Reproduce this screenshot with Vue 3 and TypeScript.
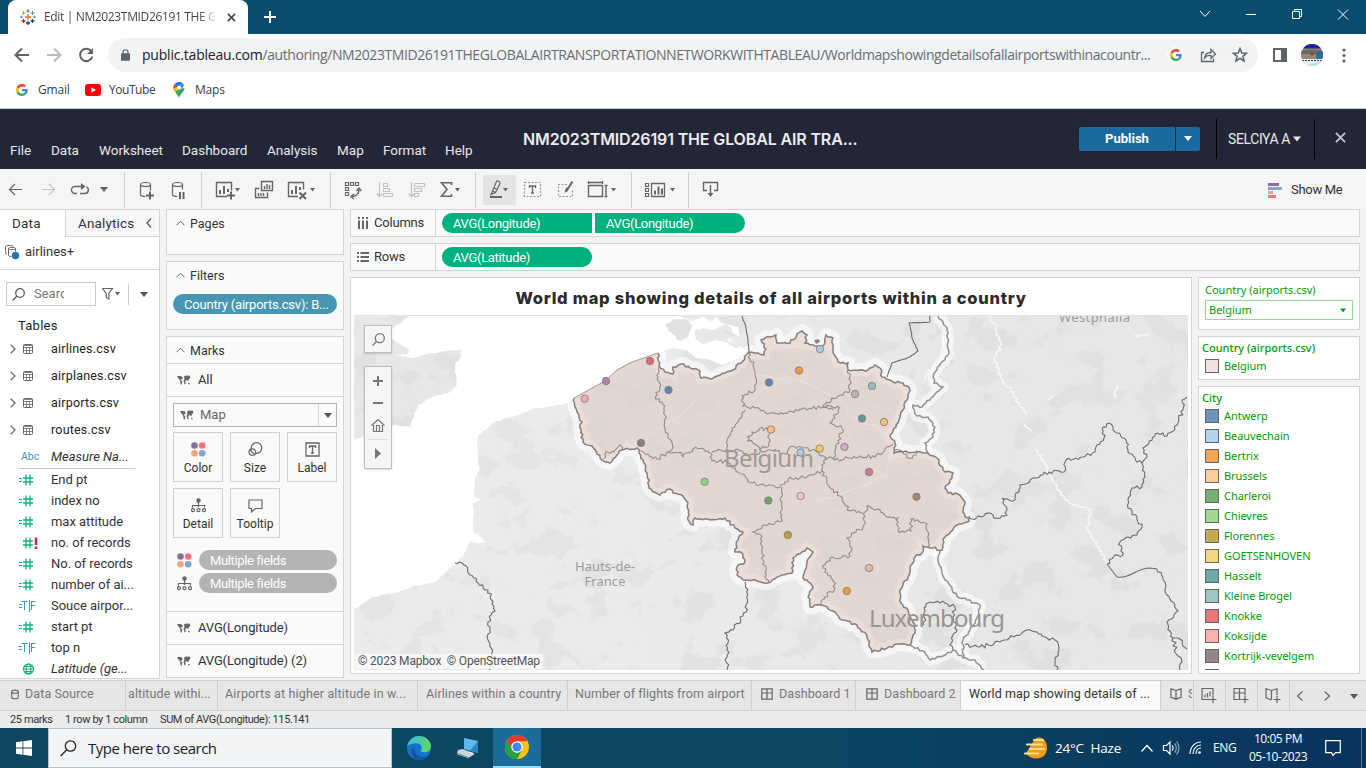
<script setup lang="ts">
type Pt = [number, number]

interface Tool { x: number; w: number; body: string; sep?: boolean; hot?: boolean; dim?: boolean }

const caret = (x: number) => `<path fill="#666" stroke="none" d="M${x - 2.5} 188h5l-2.5 3.5z"/>`

const tools: Tool[] = [
  { x: 8, w: 16, body: '<path d="M22 189.500H9.500M15 184l-5.500 5.500 5.500 5.500"/>' },
  { x: 41, w: 16, dim: true, body: '<path d="M42 189.500H54.500M49 184l5.500 5.500-5.500 5.500"/>' },
  { x: 70, w: 20, body: '<path stroke-width="1.400" d="M77 193.500H75a3.500 3.500 0 0 1 0-7H82M80 193.500H85a3.500 3.500 0 0 0 1.500-6.600"/><path fill="#666" stroke="none" d="M81 183l4.500 3.500-4.500 3.500z"/>' },
  { x: 99, w: 10, body: '<path fill="#666" stroke="none" d="M100 187h8l-4 5z"/>' },
  { x: 124, w: 1, sep: true, body: '' },
  { x: 139, w: 16, body: '<ellipse cx="145.500" cy="184.500" rx="5" ry="2"/><path d="M140.500 184.500v10c0 1.200 2 2 5 2M150.500 184.500v6"/><path stroke-width="2" d="M146 195.500h8M150 191.500v8"/>' },
  { x: 171, w: 15, body: '<ellipse cx="177.500" cy="184.500" rx="5" ry="2"/><path d="M172.500 184.500v10c0 1.200 2 2 5 2M182.500 184.500v5"/><path stroke-width="2" d="M180 192v7M183.500 192v7"/>' },
  { x: 201, w: 1, sep: true, body: '' },
  { x: 215, w: 26, body: '<path stroke-width="1.400" d="M227 196.500h-10.500v-14h15v8"/><path stroke-width="2" d="M220 194v-4M224 194v-8M228 192v-3M227 195.500h8M231 191.500v8"/>' + caret(237.5) },
  { x: 254, w: 20, body: '<path stroke-width="1.400" d="M261.500 190.500v-9h11v9zM259.500 188.500h-4v9h12v-5"/><path stroke-width="1.400" d="M264.500 189v-3M267 189v-5M269.500 189v-4M258.500 196v-3M261 196v-3M263.500 196v-3"/>' },
  { x: 287, w: 30, body: '<path stroke-width="1.400" d="M298 196.500h-9.500v-14h15v7"/><path stroke-width="2" d="M292 194v-4M296 194v-8M300 190v-3M299.500 192.500l6.500 6.500M306 192.500l-6.500 6.500"/>' + caret(312.5) },
  { x: 330, w: 1, sep: true, body: '' },
  { x: 344, w: 18, body: '<path d="M345.500 182.500h3v3h-3zM350.500 182.500h3v3h-3zM355.500 182.500h3v3h-3zM345.500 187.500h3v3h-3zM345.500 192.500h3v3h-3z"/><path stroke-width="1.400" d="M351 196.500c5 0 8-2 8-7M356.500 191l2.500-3 2.500 3M354 194l-3 2.500 3 2.500"/>' },
  { x: 376, w: 18, dim: true, body: '<path d="M379.500 182v14M376.800 193.500l2.700 3 2.700-3M383.500 183.500h4v3h-4zM383.500 188.500h6v3h-6zM383.500 193.500h9v3h-9z"/>' },
  { x: 408, w: 18, dim: true, body: '<path d="M411.500 182v14M408.800 193.500l2.700 3 2.700-3M414.500 183.500h10v3h-10zM414.500 188.500h7v3h-7zM414.500 193.500h4v3h-4z"/>' },
  { x: 440, w: 22, body: '<path stroke-width="1.600" d="M451.500 185v-2.200h-10l5.500 6.700-5.500 6.700h10v-2.200"/>' + caret(457.5) },
  { x: 475, w: 1, sep: true, body: '' },
  { x: 483, w: 33, hot: true, body: '<path d="M492.500 191l4-9.500c1-1.200 3.800 0 3.500 2l-4.500 9zM494 188l3.500 1.700M492.500 191l-1.500 3.500 4.500-2"/><path stroke-width="2" d="M490 197h12"/>' + caret(505.5) },
  { x: 523, w: 19, body: '<rect x="524.500" y="182.500" width="16" height="14" stroke-dasharray="2 1.500" stroke="#999"/><path stroke-width="1.300" d="M529.500 188v-2h6v2M532.500 186v7M531 193h3"/>' },
  { x: 557, w: 18, body: '<path stroke="#999" stroke-dasharray="2 1.500" d="M567 184.500h-8.500v12h14v-7"/><path stroke-width="2" d="M572.500 181.500l-4.500 7"/><path fill="#666" stroke="none" d="M568.500 187.500c1 2-1 5-4.500 5 1.500-1 1-3.500 2.500-5z"/>' },
  { x: 587, w: 31, body: '<path stroke-width="1.400" d="M588.500 185.500h14v11h-14zM588.500 181v3M602.500 181v3M588.500 182.500h14M604.500 185.500h3M604.500 196.500h3M606 185.500v11"/>' + caret(613.5) },
  { x: 631, w: 1, sep: true, body: '' },
  { x: 644, w: 34, body: '<path d="M645.500 183.500h3v3h-3zM645.500 188.500h3v3h-3zM645.500 193.500h3v3h-3z"/><path stroke-width="1.300" d="M651.500 183.500h13v13h-13z"/><path stroke-width="2" d="M655 194.500v-4M658.500 194.500v-8M662 194.500v-6"/>' + caret(672.5) },
  { x: 688, w: 1, sep: true, body: '' },
  { x: 702, w: 18, body: '<path stroke-width="1.400" d="M707 190.500h-3.500v-8h14v8h-3.500M710.500 185v9"/><path fill="#666" stroke="none" d="M707.500 193h6l-3 4z"/>' },
]
const toolGap = (i: number) => tools[i].x - (i ? tools[i - 1].x + tools[i - 1].w : 0)

const menu = ['File', 'Data', 'Worksheet', 'Dashboard', 'Analysis', 'Map', 'Format', 'Help']
const tables = ['airlines.csv', 'airplanes.csv', 'airports.csv', 'routes.csv']
const fields = [
  { k: 'num', t: 'End pt' }, { k: 'num', t: 'index no' }, { k: 'num', t: 'max attitude' },
  { k: 'err', t: 'no. of records' }, { k: 'num', t: 'No. of records' }, { k: 'num', t: 'number of ai...' },
  { k: 'tf', t: 'Souce airpor...' }, { k: 'num', t: 'start pt' }, { k: 'tf', t: 'top n' }, { k: 'geo', t: 'Latitude (ge...' },
]
const cities = [
  ['Antwerp', '#6f94bb'], ['Beauvechain', '#b1d3ec'], ['Bertrix', '#f5a255'], ['Brussels', '#ffcb96'],
  ['Charleroi', '#76b172'], ['Chievres', '#a1d993'], ['Florennes', '#c2ab54'], ['GOETSENHOVEN', '#f3d67e'],
  ['Hasselt', '#6ba9a5'], ['Kleine Brogel', '#9dc8c2'], ['Knokke', '#e77779'], ['Koksijde', '#ffb0ac'],
  ['Kortrijk-vevelgem', '#928885'], ['', '#e1d8d5'],
]
const sheets = [
  { t: 'altitude withi...', c: 's1' }, { t: 'Airports at higher altitude in w...', c: 's2' },
  { t: 'Airlines within a country', c: 's3' }, { t: 'Number of flights from airport', c: 's4' },
  { t: 'Dashboard 1', c: 's5', dash: true }, { t: 'Dashboard 2', c: 's6', dash: true },
  { t: 'World map showing details of ...', c: 's7 on' },
]

/* Map geometry */
const parse = (s: string): Pt[] => s.trim().split(/\s+/).map(p => p.split(',').map(Number) as Pt)
const noise = (a: number, b: number) => {
  const v = Math.sin(a * 12.9898 + b * 78.233) * 43758.5453
  return v - Math.floor(v) - 0.5
}
function rough(s: string, amp = 1.6, step = 3.2): string {
  const pts = parse(s)
  let d = `M${pts[0][0]} ${pts[0][1]}`
  for (let i = 1; i < pts.length; i++) {
    const [x0, y0] = pts[i - 1], [x1, y1] = pts[i]
    const len = Math.hypot(x1 - x0, y1 - y0)
    const n = Math.max(1, Math.round(len / step))
    for (let k = 1; k < n; k++) {
      const t = k / n, o = noise(x0 + k * 1.7, y1 + k) * amp * 2
      d += `L${(x0 + (x1 - x0) * t - (y1 - y0) / len * o).toFixed(1)} ${(y0 + (y1 - y0) * t + (x1 - x0) / len * o).toFixed(1)}`
    }
    d += `L${x1} ${y1}`
  }
  return d
}

const belgium = rough('658,353 659,366 665,372 673,374 673,367 681,364 693,369 700,371 701,378 712,379 717,376 725,373 733,370 743,361 748,353 758,353 764,355 766,349 761,340 770,337 776,335 777,343 790,343 797,334 802,331 807,335 805,343 815,346 822,346 825,342 826,335 833,338 833,350 838,362 848,363 848,370 868,370 875,365 880,368 882,377 893,382 903,383 910,390 905,402 903,410 898,423 890,435 895,443 894,453 903,452 917,452 928,453 937,458 945,472 953,473 950,480 945,488 948,493 958,494 965,502 963,512 969,521 957,525 945,537 942,550 928,547 923,546 922,553 915,557 910,568 908,577 900,590 901,603 908,610 913,622 915,633 910,645 897,644 887,648 872,652 867,637 857,625 842,620 833,611 822,605 810,607 808,597 813,587 807,580 803,578 807,563 813,552 807,548 802,552 793,558 792,573 782,575 768,583 757,581 743,580 737,575 737,567 745,562 742,553 735,552 738,540 743,532 735,528 725,518 710,520 695,518 693,525 688,520 688,503 683,496 673,493 670,489 660,495 649,488 647,473 643,460 637,448 622,450 617,455 610,463 600,458 592,446 583,442 580,425 582,422 577,412 574,398', 1.3, 2.6)
const coast = 'L594 387L605 381L617 370L632 362Z'

const provinces = [
  '659,367 657,375 661,385 655,397 662,402 665,415 665,428 668,438 673,447 668,452 657,459 648,454 640,451',
  '668,452 682,453 683,457 693,449 708,451 712,455 712,461 727,462',
  '712,452 727,450 728,438 732,428 737,423 742,415 745,410',
  '748,353 753,365 755,372 755,390 742,396 743,406 755,408 770,413 785,413 800,409 823,407 833,410',
  '848,370 850,390 840,395 825,404 823,407 838,406 838,410 830,423 842,428 839,443 835,450 835,460',
  '825,457 835,460 850,458 860,456 875,457 893,444',
  '725,450 740,451 750,455 768,450 787,454 790,447 803,448 812,450 818,452 825,457 822,471',
  '727,462 733,468 743,474 752,483 767,486 780,487 790,477 800,478 822,471 828,485 840,496 850,511 863,513',
  '760,428 768,430 769,445 760,450 753,443 747,441 752,432 760,428',
  '782,487 780,500 782,515 782,521 765,525 752,532 762,537 761,545 763,560 768,583',
  '865,512 863,527 847,538 852,548 850,556 830,558 823,568 833,580 835,588 825,597 820,605',
  '865,512 867,506 880,510 890,517 898,518 898,531 911,531 911,519 927,524 928,547',
  '604,459 606,452 614,452 620,445 622,450',
  '894,450 903,452 909,458 916,455 917,450',
].map(s => rough(s, 1.9, 2.2))

const borders = [
  '938,316 947,328 949,353 935,372 934,383 943,387 935,394 922,407 913,405 917,416 928,417 935,427 933,437 925,443 928,453',
  '940,550 938,560 945,580 957,596 967,600 980,605 977,618 970,630 963,640 963,658',
  '910,645 925,652 930,660 943,656 953,650 963,658 975,660 984,670',
].map(s => rough(s, 1.2, 2.6))

const regions = [
  '742,316 746,328 748,340 749,352',
  '930,316 930,322 909,323 913,340 918,351 910,357 892,363 887,377',
  '969,516 972,519 988,513 997,518 1007,515 1002,498 1015,500 1020,485 1037,478 1049,472 1064,472 1066,460 1083,457 1095,452 1097,445 1104,438 1103,427 1109,423 1113,427 1117,433 1126,440 1128,452 1137,462 1142,463 1147,457 1143,448 1158,433 1167,436 1177,425 1183,410 1182,400 1187,397',
  '1142,463 1145,477 1142,487 1132,488 1128,500 1128,508 1137,517 1142,527 1137,535 1120,542 1123,555 1115,555 1107,564',
  '1157,569 1165,582 1167,595 1178,611 1167,622 1173,638 1177,655 1182,662 1180,670',
  '1173,638 1178,638 1187,649',
  '965,645 980,647 1000,642 1023,632 1032,631 1047,638 1055,640 1059,650 1055,660 1057,670',
  '924,625 924,608 930,602 945,603 955,607 953,617 957,630 950,645 953,650',
  '455,563 462,563 478,583 488,590 495,611 488,622 490,630 488,640 492,653 490,670',
  '745,582 747,597 746,612 733,630 725,633 728,643 727,657 727,670',
].map((s, i) => rough(s, i < 2 ? 0.4 : 1.9, 2.4))
const smoothRegion = 'M1107 564L1117 577C1130 579 1136 568 1150 568L1157 569'

const rivers = [
  '988,316 996,325 999,340 1001,350 994,358 1001,375 1003,383 1014,392 1016,402 1024,408 1026,415',
  '1024,424 1031,431', '1035,449 1043,460 1052,478 1065,500 1078,505 1091,512 1088,530 1107,562',
  '944,336 941,360 929,370 925,380', '1135,335 1149,334', '1048,400 1054,396', '1114,398 1118,385',
].map(s => rough(s, 1.8, 2.4))
const streams = [
  '780,374 795,380 810,384 830,395 845,405 850,415 862,424 875,425 887,437',
  '892,458 885,475 870,483 850,490 832,498 812,500', '645,441 655,430 667,424 680,415 695,402', '754,374 770,377 790,382',
].map(s => rough(s, 1))

const england = rough('354,316 409,316 393,328 386,332 396,342 409,350 406,355 385,353 410,358 440,352 461,350 460,358 455,365 457,385 450,392 432,397 418,405 412,420 411,427 380,423 362,437 354,440', 0.8) + 'Z'
const mainland = rough('354,609 373,597 395,593 412,587 435,582 455,564 462,557 470,542 485,543 482,538 473,532 473,503 481,500 474,496 475,477 480,470 478,460 477,440 478,435 488,428 492,423 518,415 535,408 545,407 565,404 574,398', 0.6) +
  'L605 381L632 362L658 353L672 348L687 350L696 358L708 359L722 365L738 359L747 351L740 346L736 348L727 343L733 340L722 334L726 329L740 337L738 327L722 323L715 316L1188 316V670H354Z'
const isle1 = rough('665,325 675,319 688,320 692,328 688,337 680,341 670,332 665,325', 0.9) + 'Z'
const isle2 = rough('694,331 703,328 715,330 727,324 733,331 727,343 715,340 703,344 696,340 694,331', 0.9) + 'Z'
const isle3 = rough('680,316 690,321 702,317 712,321 716,316', 0.6) + 'Z'

const marks: [number, number, string][] = [
  [584.7, 398.7, '#f5a9a5'], [606, 381, '#ae82a6'], [650, 361, '#e1696d'], [668.5, 390, '#5f86b2'],
  [641, 443, '#8a807e'], [769, 382.5, '#5f86b2'], [799, 370.5, '#f09a47'], [820, 349, '#a9cbe6'],
  [872, 386, '#93c0b9'], [855, 394, '#bdb3b0'], [862, 418.5, '#5a9e9a'], [884, 422, '#f9bd82'],
  [771, 429.5, '#f9bd82'], [844.5, 447, '#d5a8cc'], [819.7, 448.6, '#ecca69'], [800.5, 452.5, '#a9cbe6'],
  [869, 472, '#d47a9c'], [916.5, 496.7, '#a98672'], [704.6, 481.8, '#97d188'], [768.3, 500.5, '#67a864'],
  [800.5, 496, '#f5bfd0'], [787.8, 535, '#bb9f47'], [869, 568, '#ddb9a6'], [846.8, 591, '#f19942'],
]
const worldPath = 'M0 1.500l2-.8 3 .8.8 2-2 1.200 1.600 2-.8 3-1-.500L3.200 5.500 1.500 3.500zM7 1.500l2-1 4 .3.300 2-1.300 1.500-.800 2-1.500-1.300-1.500 1 .5 2.500-1.200 1-1-4 1-1.500zM11 8l1.800.3-.400 1.200-1.400-.5z'
</script>

<template>
  <div class="screen">
    <header class="strip">
      <div class="tab">
        <svg class="fav" viewBox="0 0 16 16" width="16" height="16" fill="none">
          <path stroke="#e8762d" stroke-width="1.400" d="M8 5v6M5 8h6" />
          <path stroke="#5b879b" d="M8 0v4M6 2h4M12.500 2v4M10.500 4h4" />
          <path stroke="#eb912c" d="M3.500 2v4M1.500 4h4" /><path stroke="#7099a6" d="M0 8h3M1.500 6.500v3" />
          <path stroke="#c72035" stroke-width="1.300" d="M3.500 10v4M1.500 12h4" />
          <path stroke="#1f457e" stroke-width="1.300" d="M12.500 10v4M10.500 12h4M8 12v4M6 14h4" /><path stroke="#7199a6" d="M13 8h3M14.500 6.500v3" />
        </svg>
        <span class="tab-title">Edit | NM2023TMID26191 THE G</span>
        <svg viewBox="0 0 10 10" width="9" height="9" stroke="#45494d" stroke-width="1.800"><path d="M1 1l8 8M9 1l-8 8" /></svg>
      </div>
      <svg class="plus" viewBox="0 0 12 12" width="12" height="12" stroke="#fff" stroke-width="2"><path d="M6 0v12M0 6h12" /></svg>
      <svg class="wins" viewBox="1198 6 152 18" width="152" height="18" fill="none" stroke="#fff" stroke-width="1">
        <path d="M1200 11l5 5.500 5-5.500M1246 14.500h10M1292.500 11.500h7v7h-7zM1294.500 11.500v-2h7v7h-2M1338 9.500l10 10M1348 9.500l-10 10" />
      </svg>
    </header>

    <div class="nav">
      <svg viewBox="12 44 84 22" width="84" height="22" fill="none" stroke="#5f6368" stroke-width="2">
        <path d="M29 55H16M22 48.500L15.500 55l6.500 6.500" /><path stroke="#b8babd" d="M47 55h13M54 48.500l6.500 6.500-6.500 6.500" />
        <path d="M91.500 51.500a6.200 6.200 0 1 0 .8 5" /><path fill="#5f6368" stroke="none" d="M93 48v6h-6z" />
      </svg>
      <div class="url">
        <svg viewBox="0 0 10 13" width="9" height="12"><path fill="#5f6368" d="M1 4.500h8q1 0 1 1V12q0 1-1 1H1q-1 0-1-1V5.500q0-1 1-1z" /><path d="M2.300 5V3.300a2.700 2.600 0 0 1 5.400 0V5" fill="none" stroke="#5f6368" stroke-width="1.300" /></svg>
        <span class="addr"><b>public.tableau.com</b>/authoring/NM2023TMID26191THEGLOBALAIRTRANSPORTATIONNETWORKWITHTABLEAU/Worldmapshowingdetailsofallairportswithinacountr...</span>
        <span class="gbox"><svg viewBox="0 0 48 48" width="12" height="12"><path fill="#ea4335" d="M24 9.500c3.500 0 6.700 1.200 9.200 3.600l6.900-6.900C35.900 2.400 30.500 0 24 0 14.600 0 6.500 5.400 2.600 13.200l8 6.200C12.400 13.700 17.700 9.500 24 9.500z" /><path fill="#4285f4" d="M47 24.600c0-1.600-.2-3.100-.4-4.600H24v9h12.900c-.6 3-2.200 5.500-4.800 7.200l7.700 6C44.400 38 47 31.800 47 24.600z" /><path fill="#fbbc05" d="M10.500 28.600a14.500 14.500 0 0 1 0-9.200l-8-6.200a24 24 0 0 0 0 21.600z" /><path fill="#34a853" d="M24 48c6.500 0 11.900-2.100 15.900-5.800l-7.700-6c-2.200 1.500-5 2.300-8.200 2.300-6.300 0-11.600-4.200-13.500-9.900l-8 6.200C6.500 42.600 14.600 48 24 48z" /></svg></span>
        <svg class="share" viewBox="1200 47 48 17" width="48" height="17" fill="none" stroke="#5f6368" stroke-width="1.300">
          <path d="M1204 52.500h-2.500v9h12v-3M1204.500 58c.5-4 3.500-5.500 6.500-5.500v-3.200l4.500 4.700-4.500 4.500v-3c-3-.2-5 .5-6.500 2.500z" />
          <path stroke-width="1.500" d="M1240 48.500l1.800 4.500 4.700.3-3.600 3 1.200 4.700-4.100-2.600-4.100 2.600 1.200-4.700-3.600-3 4.700-.3z" />
        </svg>
      </div>
      <svg class="navr" viewBox="1270 42 86 26" width="86" height="26">
        <path d="M1274 49h12v12h-12z" fill="none" stroke="#5f6368" stroke-width="2" /><path fill="#5f6368" d="M1281 48h6v14h-6z" />
        <defs><clipPath id="ava"><circle cx="1312" cy="55" r="11" /></clipPath></defs>
        <g clip-path="url(#ava)"><path fill="#8d8a7d" d="M1301 44h22v22h-22z" /><path fill="#2222a4" d="M1301 44h22v4.500h-22z" /><path fill="#6e6b5e" d="M1301 50h22v4h-22z" /><path fill="#2c6aa0" d="M1316 52h7v7h-7z" /><path fill="#e9eef0" d="M1301 59h22v7h-22z" /><path stroke="#333" stroke-dasharray="2 1" d="M1302 60.500h20" /><path fill="#bde0f3" d="M1310 64l13-3v5h-13z" /><circle cx="1312" cy="54" r="1.500" fill="#b02a2a" /></g>
        <g fill="#5f6368"><circle cx="1344" cy="50" r="1.600" /><circle cx="1344" cy="55.500" r="1.600" /><circle cx="1344" cy="61" r="1.600" /></g>
      </svg>
    </div>

    <div class="marks-bar">
      <svg viewBox="0 0 48 48" width="12" height="12"><path fill="#ea4335" d="M24 9.500c3.500 0 6.700 1.200 9.200 3.600l6.900-6.900C35.900 2.400 30.500 0 24 0 14.600 0 6.500 5.400 2.600 13.200l8 6.200C12.400 13.700 17.700 9.500 24 9.500z" /><path fill="#4285f4" d="M47 24.600c0-1.600-.2-3.100-.4-4.600H24v9h12.900c-.6 3-2.200 5.500-4.800 7.200l7.700 6C44.400 38 47 31.800 47 24.600z" /><path fill="#fbbc05" d="M10.500 28.600a14.500 14.500 0 0 1 0-9.200l-8-6.200a24 24 0 0 0 0 21.600z" /><path fill="#34a853" d="M24 48c6.500 0 11.900-2.100 15.900-5.800l-7.700-6c-2.200 1.500-5 2.300-8.200 2.300-6.300 0-11.600-4.200-13.500-9.900l-8 6.200C6.500 42.600 14.600 48 24 48z" /></svg>
      <span class="bm1">Gmail</span>
      <svg viewBox="0 0 16 12" width="16" height="12"><rect width="16" height="12" rx="3" fill="#f00" /><path fill="#fff" d="M6.300 3.300v5.400L11 6z" /></svg>
      <span class="bm2">YouTube</span>
      <svg viewBox="0 0 12 16" width="12" height="16"><path fill="#34a853" d="M.8 8C2 10.500 5 12.500 6 16c.8-4 5.500-6 5.500-10z" /><path fill="#4285f4" d="M6 0a5.700 5.700 0 0 1 5.200 3.500L6.500 9 3 4z" /><path fill="#1a73e8" d="M6 0a6 6 0 0 0-4.500 2L5 5l4-4.300z" /><path fill="#ea4335" d="M1.500 2A6 6 0 0 0 .2 6l2 2L5 5z" /><path fill="#fbbc04" d="M.2 6c0 2 .8 3 2 4.800L7.500 5z" /><circle cx="6" cy="5.700" r="2.100" fill="#fff" /></svg>
      <span class="bm3">Maps</span>
    </div>

    <div class="apphead">
      <nav class="menu"><span v-for="m in menu" :key="m">{{ m }}</span></nav>
      <div class="wb">NM2023TMID26191 THE GLOBAL AIR TRA...</div>
      <div class="publish"><span>Publish</span><i><svg viewBox="0 0 8 5" width="8" height="5"><path fill="#fff" d="M0 0h8L4 5z" /></svg></i></div>
      <div class="user">SELCIYA A<svg viewBox="0 0 8 5" width="8" height="6"><path fill="#e8e8ea" d="M0 0h8L4 5z" /></svg></div>
      <svg class="close" viewBox="0 0 12 12" width="11" height="11" stroke="#c3c4c9" stroke-width="2"><path d="M1 1l10 10M11 1L1 11" /></svg>
    </div>

    <div class="toolbar">
      <template v-for="(t, i) in tools" :key="t.x">
        <svg class="tool" :class="{ sep: t.sep, hot: t.hot }" :style="{ marginLeft: toolGap(i) + 'px' }" :width="t.w" :height="t.hot ? 30 : 36"
          :viewBox="`${t.x} ${t.hot ? 175 : 172} ${t.w} ${t.hot ? 30 : 36}`" fill="none" :stroke="t.dim ? '#c3c3c3' : '#666'" stroke-width="1.200" v-html="t.body" />
      </template>
      <div class="showme"><svg viewBox="0 0 14 15" width="14" height="15"><path fill="#896e99" d="M0 0h11v3H0z" /><path fill="#82a6cc" d="M0 4h14v3H0z" /><path fill="#f2a47e" d="M0 8h5v3H0z" /><path fill="#fc7181" d="M0 12h8v3H0z" /></svg><span>Show Me</span></div>
    </div>

    <main class="work">
      <aside class="data">
        <div class="dtabs"><span class="on">Data</span><span class="an">Analytics<svg viewBox="0 0 6 10" width="6" height="10" fill="none" stroke="#555" stroke-width="1.200"><path d="M5 .5L1 5l4 4.500" /></svg></span></div>
        <div class="ds">
          <svg viewBox="0 0 15 15" width="15" height="15" fill="none" stroke="#666"><path d="M2 9.500C.5 9 .5 8 .5 2c0-2 7-2 8-.5M3.500 3.500c0-1.500 7-1.500 7 0s-7 1.500-7 0zM3.500 3.500v6.500c0 1 1 1.500 3 1.500M10.500 3.500v3" /><circle cx="10.500" cy="10.500" r="3.700" fill="#2075b5" stroke="none" /></svg>
          <span>airlines+</span>
        </div>
        <div class="find">
          <div class="sbox"><svg viewBox="0 0 13 13" width="13" height="13" fill="none" stroke="#555" stroke-width="1.200"><circle cx="8" cy="5" r="4.300" /><path d="M5 8L.5 12.500" /></svg><span>Search</span></div>
          <svg viewBox="102 287 20 14" width="20" height="14" fill="none" stroke="#666" stroke-width="1.200"><path d="M102.500 288.500h10l-3.700 5v5.500l-2.600-1.500v-4z" /><path fill="#666" stroke="none" d="M115 292h5l-2.500 3.500z" /></svg>
          <i class="vl"></i>
          <svg viewBox="0 0 8 5" width="8" height="5"><path fill="#555" d="M0 0h8L4 5z" /></svg>
        </div>
        <div class="th">Tables</div>
        <div v-for="t in tables" :key="t" class="trow">
          <svg viewBox="0 0 24 10" width="24" height="10" fill="none" stroke="#666"><path d="M.7.800L5 5 .7 9.200" stroke-width="1.200" /><rect x="13.500" y=".5" width="9" height="9" rx="1" /><path d="M13.500 1.500h9M13.500 3.500h9M13.500 6.500h9M16.500 3.500v6M19.500 3.500v6" stroke-width=".8" /></svg>
          <span>{{ t }}</span>
        </div>
        <div class="mn"><em class="abc">Abc</em><i>Measure Na...</i></div>
        <div class="rule"></div>
        <div v-for="f in fields" :key="f.t" class="frow">
          <svg viewBox="18 -7 24 14" width="24" height="14" fill="none" stroke="#13b183" stroke-width="1.300">
            <path v-if="f.k === 'num'" stroke-width="1" d="M19 -1.500h3M19 1.500h3" />
            <path v-if="f.k === 'num' || f.k === 'err'" d="M26 -5.500v11M30 -5.500v11M23 -2h10M23 2h10" />
            <path v-if="f.k === 'err'" stroke="#c62d42" stroke-width="2.600" d="M36 -5.500v7.500M36 3.500v2.500" />
            <g v-if="f.k === 'tf'" stroke="#4996b2" stroke-width="1.100"><path d="M19 -1.500h3M19 1.500h3M21.500 -4.500h6M24.500 -4.500v8.500M29.500 -6v12M31.500 4v-8.500h4M31.500 -.5h3.500" /></g>
            <g v-if="f.k === 'geo'" stroke-width="1.200"><circle cx="28.500" cy="0" r="5" /><ellipse cx="28.500" cy="0" rx="2.300" ry="5" /><path d="M23.500 0h10M24.200 -2.500h8.600M24.200 2.500h8.600" /></g>
          </svg>
          <span :class="{ it: f.k === 'geo' }">{{ f.t }}</span>
        </div>
      </aside>

      <section class="cards">
        <div class="card pages"><h4><svg viewBox="0 0 10 6" width="9" height="6" fill="none" stroke="#555"><path d="M.5 5.500L5 1l4.500 4.500" /></svg>Pages</h4></div>
        <div class="card filters"><h4><svg viewBox="0 0 10 6" width="9" height="6" fill="none" stroke="#555"><path d="M.5 5.500L5 1l4.500 4.500" /></svg>Filters</h4><div class="fpill">Country (airports.csv): B...</div></div>
        <div class="card mk">
          <h4><svg viewBox="0 0 10 6" width="9" height="6" fill="none" stroke="#555"><path d="M.5 5.500L5 1l4.500 4.500" /></svg>Marks</h4>
          <div class="mrow"><svg viewBox="0 0 14 10" width="14" height="10"><path fill="#666" :d="worldPath" /></svg>All</div>
          <div class="sel"><svg viewBox="0 0 14 10" width="14" height="10"><path fill="#666" :d="worldPath" /></svg><span>Map</span><i><svg viewBox="0 0 8 5" width="8" height="5"><path fill="#555" d="M0 0h8L4 5z" /></svg></i></div>
          <div class="btns">
            <div><svg viewBox="0 0 15 15" width="15" height="15"><circle cx="3.500" cy="3.500" r="3.300" fill="#866f98" /><circle cx="11.200" cy="3.500" r="3.300" fill="#fb7080" /><circle cx="3.500" cy="11.200" r="3.300" fill="#f0a57f" /><circle cx="11.200" cy="11.200" r="3.300" fill="#82a5cb" /></svg>Color</div>
            <div><svg viewBox="0 0 15 15" width="15" height="15" fill="none" stroke="#666" stroke-width="1.200"><circle cx="8.500" cy="6" r="5.300" /><circle cx="4.300" cy="10.200" r="3.300" fill="#fafafa" /><path d="M2 8l4.500 4.500" /></svg>Size</div>
            <div><svg viewBox="0 0 15 15" width="15" height="15" fill="none" stroke="#666" stroke-width="1.300"><path d="M1 1h13v13H1zM4.500 6V4h6v2M7.500 4v7M6 11h3" /></svg>Label</div>
            <div><svg viewBox="0 0 15 15" width="15" height="15" fill="none" stroke="#666" stroke-width="1.200"><circle cx="7.500" cy="2.500" r="2.200" fill="#666" stroke="none" /><path d="M7.500 4v5M1.500 9.500V7.500h12v2" /><circle cx="2" cy="12.200" r="1.500" /><circle cx="7.500" cy="12.200" r="1.500" /><circle cx="13" cy="12.200" r="1.500" /></svg>Detail</div>
            <div><svg viewBox="0 0 15 15" width="15" height="15" fill="none" stroke="#666" stroke-width="1.200"><path d="M1 2h13v8.500H7.500L3.500 14v-3.500H1z" /></svg>Tooltip</div>
          </div>
          <div class="mf"><svg viewBox="0 0 15 15" width="15" height="15"><circle cx="3.500" cy="3.500" r="3.300" fill="#866f98" /><circle cx="11.200" cy="3.500" r="3.300" fill="#fb7080" /><circle cx="3.500" cy="11.200" r="3.300" fill="#f0a57f" /><circle cx="11.200" cy="11.200" r="3.300" fill="#82a5cb" /></svg><span>Multiple fields</span></div>
          <div class="mf"><svg viewBox="0 0 15 15" width="15" height="15" fill="none" stroke="#666" stroke-width="1.200"><circle cx="7.500" cy="2.500" r="2.200" fill="#666" stroke="none" /><path d="M7.500 4v5M1.500 9.500V7.500h12v2" /><circle cx="2" cy="12.200" r="1.500" /><circle cx="7.500" cy="12.200" r="1.500" /><circle cx="13" cy="12.200" r="1.500" /></svg><span>Multiple fields</span></div>
          <div class="mrow top"><svg viewBox="0 0 14 10" width="14" height="10"><path fill="#666" :d="worldPath" /></svg>AVG(Longitude)</div>
          <div class="mrow last"><svg viewBox="0 0 14 10" width="14" height="10"><path fill="#666" :d="worldPath" /></svg>AVG(Longitude) (2)</div>
        </div>
      </section>

      <section class="canvas">
        <div class="shelf"><div class="sl"><svg viewBox="0 0 12 12" width="12" height="12" stroke="#666" stroke-width="2"><path stroke-dasharray="2 1.500 10" d="M2 0v12M6 0v12M10 0v12" /></svg>Columns</div><span class="pill l">AVG(Longitude)</span><span class="pill r">AVG(Longitude)</span></div>
        <div class="shelf"><div class="sl"><svg viewBox="0 0 12 12" width="12" height="12" stroke="#666" stroke-width="2"><path stroke-dasharray="2 1.500 10" d="M0 2h12M0 6h12M0 10h12" /></svg>Rows</div><span class="pill">AVG(Latitude)</span></div>
        <div class="lower">
          <div class="view">
            <h1>World map showing details of all airports within a country</h1>
            <div class="map">
              <svg viewBox="354 316 834 354" width="834" height="354">
                <defs>
                  <clipPath id="land"><path :d="england + mainland" /></clipPath>
                  <clipPath id="be"><path :d="belgium + coast" /></clipPath>
                  <clipPath id="halo"><path :d="mainland" /></clipPath>
                  <linearGradient id="east" x1="0" x2="1"><stop offset=".35" stop-color="#ebebeb" /><stop offset=".75" stop-color="#e7e7e7" /></linearGradient>
                  <filter id="woods" x="0" y="0" width="100%" height="100%" color-interpolation-filters="sRGB"><feTurbulence type="fractalNoise" baseFrequency=".028 .034" numOctaves="5" seed="8" /><feColorMatrix values="0 0 0 0 .8  0 0 0 0 .8  0 0 0 0 .8  14 0 0 0 -7.900" /><feComponentTransfer><feFuncA type="linear" slope=".5" /></feComponentTransfer></filter>
                </defs>
                <rect x="354" y="316" width="834" height="354" fill="#fff" />
                <path :d="england" fill="#e7e7e7" /><path :d="mainland" fill="url(#east)" />
                <path :d="isle1" fill="#e2e2e2" /><path :d="isle2" fill="#e8e8e8" /><path :d="isle3" fill="#e8e8e8" />
                <g clip-path="url(#land)"><rect x="354" y="316" width="834" height="354" filter="url(#woods)" opacity=".5" /></g>
                <g fill="none" stroke="#f8f8f8" stroke-width="1.500"><path v-for="r in rivers" :key="r" :d="r" /></g>
                <g clip-path="url(#halo)" fill="none" stroke="#fff" stroke-opacity=".58" stroke-width="14" stroke-linejoin="round"><path :d="belgium" /><path v-for="b in borders" :key="b" :d="b" stroke-width="11" /></g>
                <g fill="none" stroke="#6d6d6d" stroke-width="1.100"><path v-for="r in regions" :key="r" :d="r" /><path :d="smoothRegion" /></g>
                <g fill="none" stroke="#939393" stroke-width="1.500"><path v-for="b in borders" :key="b" :d="b" /></g>
                <path :d="belgium + coast" fill="#e2d7d2" />
                <g clip-path="url(#be)"><rect x="574" y="330" width="400" height="325" filter="url(#woods)" opacity=".22" /><path :d="belgium" fill="none" stroke="#eddfd9" stroke-width="11" stroke-opacity=".75" /></g>
                <g fill="none" stroke="#ece3df"><path v-for="s in streams" :key="s" :d="s" /></g>
                <g fill="none" stroke="#968c88" stroke-width="1.100"><path v-for="p in provinces" :key="p" :d="p" /></g>
                <path :d="belgium" fill="none" stroke="#857f7d" stroke-width="1.500" />
                <path d="M574 398L594 387L605 381L617 370L632 362L658 353" fill="none" stroke="#a09894" />
                <path d="M814 340l5-1 1 3-4 2z" fill="#888" />
                <g class="lab" fill="#a29995"><text x="724" y="467" font-size="24" textLength="90">Belgium</text><text x="869" y="627" font-size="24" textLength="136" fill="#999492">Luxembourg</text></g>
                <g class="lab" fill="#9c9c9c" font-size="13"><text x="575" y="570.500" textLength="60">Hauts-de-</text><text x="584.500" y="586" textLength="41">France</text><text x="1059" y="322" textLength="71">Westphalia</text></g>
                <g stroke="#7d7370" stroke-opacity=".75"><circle v-for="m in marks" :key="m[0] + m[1]" :cx="m[0]" :cy="m[1]" r="3.700" :fill="m[2]" /></g>
              </svg>
              <div class="mb find-btn"><svg viewBox="0 0 13 13" width="13" height="13" fill="none" stroke="#777" stroke-width="1.300"><circle cx="7.800" cy="5.200" r="4.500" /><path d="M4.500 8.500L.5 12.500" /></svg></div>
              <div class="mb zoom"><svg viewBox="365 367 26 101" width="26" height="101" fill="none" stroke="#757575" stroke-width="2"><path d="M373 381h10M378 376v10M373 403h10" /><path stroke-width="1.200" d="M371.500 425.500l6.500-6 6.500 6M373.500 425v6.500h9V425M376.500 431.500v-6h3v6" /><path stroke="#ddd" stroke-width="1" d="M368 439.500h20" /><path fill="#757575" stroke="none" d="M375 448l6 5.500-6 5.500z" /></svg></div>
              <div class="attr">© 2023 Mapbox&nbsp; © OpenStreetMap</div>
            </div>
          </div>
          <div class="legends">
            <div class="lg flt"><p>Country (airports.csv)</p><div class="dd">Belgium<svg viewBox="0 0 6 4" width="6" height="5"><path fill="#00a000" d="M0 0h6L3 4z" /></svg></div></div>
            <div class="lg cty"><p class="h">Country (airports.csv)</p><div class="li"><i class="bel"></i>Belgium</div></div>
            <div class="lg cit"><p class="h">City</p><div class="cl"><div v-for="c in cities" :key="c[0]" class="li"><i :style="{ background: c[1] }"></i>{{ c[0] }}</div></div></div>
          </div>
        </div>
      </section>
    </main>

    <div class="sheets">
      <div class="src"><svg viewBox="0 0 9 11" width="8" height="11" fill="none" stroke="#666" stroke-width="1.200"><ellipse cx="4.500" cy="2.300" rx="3.700" ry="1.700" /><path d="M.8 2.300v6.500c0 2 7.400 2 7.400 0V2.300" /></svg>Data Source</div>
      <div v-for="s in sheets" :key="s.t" class="sh" :class="s.c"><svg v-if="s.dash" viewBox="0 0 12 12" width="12" height="12" fill="none" stroke="#666" stroke-width="1.200"><path d="M.8.800h10.400v10.400H.800zM6 .8v10.400M.8 5h10.400" /></svg>{{ s.t }}</div>
      <div class="book"><svg viewBox="0 0 12 12" width="12" height="12" fill="none" stroke="#666" stroke-width="1.200"><path d="M6 2.500L1 .8v8.500L6 11l5-1.700V.8zM6 2.500V11" /></svg><span>S</span></div>
      <div class="nw"><svg viewBox="0 0 16 16" width="16" height="16" fill="none" stroke="#666" stroke-width="1.200"><path d="M9 11.500H1v-11h11v7M4 9.500v-3M6.500 9.500V5M9 8.500v-5M8.500 11.500h7M12 8v7" /></svg></div>
      <div class="nw"><svg viewBox="0 0 16 16" width="16" height="16" fill="none" stroke="#666" stroke-width="1.200"><path d="M8 11.500H1v-11h11v7M6.500.5v11M1 5h11M8.500 11.500h7M12 8v7" /></svg></div>
      <div class="nw"><svg viewBox="0 0 16 16" width="16" height="16" fill="none" stroke="#666" stroke-width="1.200"><path d="M6.500 2.500L1 .8v9L6.500 12M6.500 2.500L12 .8v6.500M6.500 2.500v9M8.500 11.500h7M12 8v7" /></svg></div>
      <svg class="pg" viewBox="1290 687 76 16" width="76" height="16" fill="none" stroke="#666" stroke-width="1.200"><path d="M1302.500 691.500l-5 4.500 5 4.500M1324.500 691.500l5 4.500-5 4.500" /><path fill="#555" stroke="none" d="M1350 694h8l-4 5z" /></svg>
    </div>
    <div class="status"><span class="n1">25 marks</span><span class="n2">1 row by 1 column</span><span>SUM of AVG(Longitude): 115.141</span></div>

    <footer class="task">
      <div class="start"><svg viewBox="0 0 16 16" width="16" height="16" fill="#fff"><path d="M0 2.200l6.500-.9v6.300H0zM7.300 1.200L16 0v7.600H7.300zM0 8.400h6.500v6.300L0 13.800zM7.300 8.400H16V16l-8.700-1.200z" /></svg></div>
      <div class="ts"><svg viewBox="0 0 17 17" width="17" height="17" fill="none" stroke="#222" stroke-width="1.300"><circle cx="10.500" cy="6" r="5.200" /><path d="M6.700 9.800L.7 16" /></svg>Type here to search</div>
      <div class="app edge"><svg viewBox="0 0 24 24" width="24" height="24"><defs><linearGradient id="eg" x1="0" y1="0" x2="1" y2=".4"><stop offset="0" stop-color="#36b9e8" /><stop offset="1" stop-color="#5bd867" /></linearGradient></defs><circle cx="12" cy="12" r="12" fill="#1672c9" /><path fill="url(#eg)" d="M.3 10C2 3 7 0 12 0c7 0 12 5 12 10 0 4-3 6.300-6.500 6.300-3 0-4-1-3.500-2 2-2.500 0-7-5-7C4 7.300 1 10 .3 10z" /><path fill="#1256a5" d="M8 11c-1.500 4 1 10 8 10 2.500 0 4-.8 5.500-1.800C19 23 15 24 12 24 6 24 4 18 4.500 15c.3-2 1.500-3.500 3.500-4z" /></svg></div>
      <div class="app pc"><svg viewBox="0 0 24 24" width="24" height="24"><path fill="#5eb7ed" d="M8 2l14 3v12L8 13z" /><path fill="#2d84c6" d="M22 5v12l-8-2.300z" /><path fill="#c6d3db" d="M2 14l5-1 12 5-6 3.500L1 17z" /><path fill="#8da2af" d="M1 17l12 4.500v1L1 18.500z" /><path fill="#dbe4e9" d="M13 15.500l4 1v2l-5-1.500z" /></svg></div>
      <div class="app chr"><svg viewBox="0 0 24 24" width="24" height="24"><circle cx="12" cy="12" r="12" fill="#fbc116" /><path fill="#e33b2e" d="M1.600 6A12 12 0 0 1 22.400 6L12 6.500 6.800 15z" /><path fill="#269f42" d="M1.600 6A12 12 0 0 0 12 24l5-9-5.500 3z" /><path fill="#269f42" d="M1.600 6l5.300 9 5.100 2.500 2 3L12 24C4 24-3 15 1.600 6z" /><circle cx="12" cy="12" r="5.800" fill="#fff" /><circle cx="12" cy="12" r="4.500" fill="#4285f4" /></svg></div>
      <div class="tray">
        <svg class="wx" viewBox="0 0 25 24" width="25" height="24"><path fill="#f49b1c" d="M12 3c6-4 12 1 12 9 0 7-5 10.500-10.500 10.500C8 22.500 4.500 20 3 17z" /><path stroke="#ffe08a" stroke-width="2.200" stroke-linecap="round" d="M11 4h9M4 8.500h15M7 13h14M2 17.500h13" /></svg>
        <span class="deg">24°C&nbsp; Haze</span>
        <svg viewBox="1140 738 64 20" width="64" height="20" fill="none" stroke="#fff" stroke-width="1.200"><path d="M1141.500 751.500l5.500-6 5.500 6M1163.500 745.500h3l3.500-3.500v12l-3.500-3.500h-3zM1172 745.500c1.500 1.500 1.500 3.500 0 5" /><path stroke="#8fa7b6" d="M1174.500 743.500c2.500 3 2.500 6 0 9M1176.500 741.500c3 4 3 9 0 13" /><path d="M1190 754c0-7 5-12 11-12M1193 754c0-5 3.500-9 8-9M1196 754c0-3.500 2-6 5-6" /><circle cx="1199.500" cy="752.500" r="1.300" fill="#fff" stroke="none" /></svg>
        <span class="eng">ENG</span>
        <div class="clock"><span>10:05 PM</span><span>05-10-2023</span></div>
        <svg viewBox="0 0 16 17" width="16" height="17" fill="none" stroke="#fff" stroke-width="1.200"><path d="M.7.700h14.600v12H10.500L8 15.500l-1.500-2.800H.7z" /></svg>
        <i class="peek"></i>
      </div>
    </footer>
  </div>
</template>

<style>
html, body { margin: 0; background: #f3f3f3; overflow: hidden; }
</style>

<style scoped>
.screen { width: 1366px; height: 768px; overflow: hidden; display: flex; flex-direction: column; font: 13px/16px Roboto, "Noto Sans", sans-serif; color: #333; background: #f3f3f3; white-space: nowrap; }
.screen * { box-sizing: border-box; }
.screen svg { flex: none; display: block; }
.strip { height: 34px; flex: none; background: #084c6e; display: flex; align-items: center; padding-left: 8px; }
.tab { width: 240px; height: 34px; background: #fff; border-radius: 8px 8px 0 0; display: flex; align-items: center; padding: 0 12px; font: 12px/16px "Open Sans", sans-serif; color: #3c4043; }
.tab-title { width: 172px; margin: 0 12px 0 8px; overflow: hidden; letter-spacing: -.35px; background: linear-gradient(90deg, #3c4043 154px, #fff 174px); background-clip: text; color: transparent; }
.plus { margin-left: 16px; }
.wins { margin-left: auto; margin-right: 16px; margin-top: -4px; }
.nav { height: 40px; flex: none; background: #fff; display: flex; align-items: center; padding-left: 12px; padding-top: 2px; }
.url { margin-left: 12px; width: 1150px; height: 34px; border-radius: 17px; background: #f1f3f4; display: flex; align-items: center; padding-left: 13px; font: 14px/18px "Open Sans", sans-serif; color: #6a6e72; }
.addr { margin-left: 12px; width: 1020px; letter-spacing: -.42px; }
.addr b { font-weight: 400; color: #202124; letter-spacing: -.2px; }
.gbox { width: 17px; height: 17px; background: #fff; border-radius: 9px; margin-left: 5px; display: flex; align-items: center; justify-content: center; }
.share { margin-left: 16px; }
.navr { margin-left: 12px; }
.marks-bar { height: 35px; flex: none; background: #fff; border-bottom: 1px solid #c9cfcf; display: flex; align-items: center; padding: 0 0 3px 16px; font: 12px/16px "Open Sans", sans-serif; color: #3c4043; letter-spacing: -.2px; }
.bm1 { margin-left: 10px; width: 47px; }
.bm2 { margin-left: 8px; width: 64px; letter-spacing: -.45px; }
.bm3 { margin-left: 10px; }
.apphead { height: 60px; flex: none; background: #232637; color: #e8e8ea; display: flex; align-items: center; padding-left: 10px; }
.menu { width: 513px; padding-top: 21px; display: grid; grid-template-columns: 41px 48px 83px 85px 70px 46px 62px 50px; font-size: 13.500px; }
.wb { width: 556px; font: 600 16px/20px Inter, sans-serif; letter-spacing: -.14px; color: #ececee; }
.publish { display: flex; gap: 1px; height: 24px; color: #fff; font-weight: 700; line-height: 24px; text-align: center; font-size: 13px; margin-top: -1px; }
.publish span { width: 96px; background: #1a699f; border-radius: 2px 0 0 2px; }
.publish i { width: 24px; background: #1a699f; border-radius: 0 2px 2px 0; display: flex; align-items: center; justify-content: center; }
.user { margin-left: 16px; width: 99px; height: 40px; border: solid #000; border-width: 0 1px; display: flex; align-items: center; padding-left: 11px; gap: 3px; font-size: 14px; letter-spacing: -.4px; }
.close { margin-left: 20px; margin-top: -3px; }
.toolbar { height: 40px; flex: none; background: #f5f5f5; display: flex; align-items: center; padding-top: 2px; }
.sep { background: #d0d0d0; }
.hot { background: #e4e4e4; }
.showme { margin-left: auto; width: 98px; display: flex; align-items: center; gap: 9px; letter-spacing: -.3px; }
.work { height: 471px; flex: none; display: flex; }
.data { width: 160px; height: 470px; background: #fff; border: solid #d4d4d4; border-width: 1px 1px 1px 0; overflow: hidden; }
.dtabs { display: flex; height: 27px; font-size: 13.500px; line-height: 27px; }
.dtabs .on { width: 65px; padding-left: 12px; letter-spacing: .2px; }
.dtabs .an { width: 94px; background: #f7f7f7; border: solid #d4d4d4; border-width: 0 0 1px 1px; padding-left: 12px; display: flex; align-items: center; gap: 12px; letter-spacing: .15px; }
.ds { height: 33px; border-bottom: 1px solid #d4d4d4; display: flex; align-items: center; padding: 0 0 2px 5px; gap: 5px; }
.find { margin: 12px 0 0 6px; height: 24px; display: flex; align-items: center; }
.sbox { width: 90px; height: 24px; border: 1px solid #c8c8c8; display: flex; align-items: center; padding-left: 5px; color: #777; margin-right: 6px; }
.sbox span { width: 30px; overflow: hidden; margin-left: 9px; }
.vl { width: 1px; height: 21px; background: #ccc; margin: 0 11px 0 6px; }
.th { margin: 12px 0 0 18px; color: #222; letter-spacing: .25px; height: 17px; }
.trow { height: 27px; display: flex; align-items: center; padding-left: 10px; gap: 17px; color: #222; font-size: 12.500px; letter-spacing: .2px; }
.mn { height: 25px; display: flex; align-items: center; padding-left: 21px; padding-top: 2px; }
.abc { width: 30px; color: #4996b2; font: 10.500px/14px Roboto, sans-serif; }
.rule { margin: 0 24px 0 18px; border-top: 1px solid #ccc; }
.frow { height: 21px; display: flex; align-items: center; padding-left: 18px; gap: 9px; letter-spacing: -.03px; }
.it { font-style: italic; }
.cards { margin-left: 6px; width: 178px; display: flex; flex-direction: column; gap: 6px; }
.card { border: 1px solid #d4d4d4; background: #fafafa; }
.card h4 { margin: 0; font: 12.500px/25px Roboto, sans-serif; display: flex; align-items: center; gap: 5px; padding: 0 0 1px 9px; height: 27px; }
.pages { height: 46px; } .filters { height: 69px; } .mk { height: 342px; }
.fpill { margin: 5px 6px 0; height: 20px; border-radius: 10px; background: #4996b2; color: #fff; line-height: 21px; padding-left: 11px; letter-spacing: -.2px; }
.mrow { height: 33px; border: solid #d4d4d4; border-width: 1px 0; display: flex; align-items: center; padding-left: 10px; gap: 7px; letter-spacing: -.12px; }
.mk .mrow:nth-child(2) { margin-top: -1px; height: 34px; }
.sel { margin: 6px 6px 0; height: 24px; border: 1px solid #b4b4b4; display: flex; align-items: center; padding-left: 6px; gap: 6px; color: #666; }
.sel i { margin-left: auto; width: 18px; height: 22px; border-left: 1px solid #d4d4d4; display: flex; align-items: center; justify-content: center; }
.btns { margin: 5px 6px 0; display: grid; grid-template-columns: 50px 50px 50px; gap: 6px 7px; }
.btns div { height: 50px; border: 1px solid #d0d0d0; display: flex; flex-direction: column; align-items: center; padding-top: 9px; gap: 3px; font-size: 12px; }
.mf { margin: 3px 6px 0 10px; height: 20px; display: flex; align-items: center; gap: 7px; }
.btns + .mf { margin-top: 12px; }
.mf span { width: 138px; height: 20px; border-radius: 10px; background: #b4b4b4; color: #fff; line-height: 21px; padding-left: 11px; letter-spacing: -.36px; }
.mrow.top { margin-top: 18px; height: 34px; } .mrow.last { height: 32px; border-top: 0; border-bottom: 0; }
.canvas { margin-left: 6px; width: 1010px; display: flex; flex-direction: column; gap: 6px; }
.shelf { height: 28px; border: 1px solid #d4d4d4; background: #fafafa; display: flex; align-items: center; }
.sl { width: 85px; height: 26px; border-right: 1px solid #d4d4d4; display: flex; align-items: center; gap: 5px; padding-left: 6px; margin-right: 6px; letter-spacing: -.2px; }
.pill { width: 150px; height: 20px; background: #00b180; color: #fff; border-radius: 10px; line-height: 21px; padding-left: 11px; letter-spacing: -.32px; }
.pill.l { border-radius: 10px 0 0 10px; margin-right: 3px; } .pill.r { border-radius: 0 10px 10px 0; }
.lower { display: flex; gap: 6px; height: 397px; }
.view { width: 842px; height: 397px; border: 1px solid #d4d4d4; background: #fff; padding-left: 3px; }
.view h1 { margin: 0; height: 37px; width: 834px; padding-top: 10px; font: 800 16.500px/20px Inter, sans-serif; letter-spacing: .73px; text-align: center; color: #2b2b2b; }
.map { position: relative; width: 834px; height: 355px; border-top: 1px solid #e3e3e3; }
.lab { font-family: "Noto Sans", sans-serif; }
.mb { position: absolute; left: 10px; width: 28px; background: #f5f5f5; border: 1px solid #bdbdbd; box-shadow: 0 1px 2px rgba(0,0,0,.15); display: flex; align-items: center; justify-content: center; }
.find-btn { top: 9px; height: 28px; } .zoom { top: 50px; height: 103px; }
.attr { position: absolute; left: 1px; bottom: 1px; height: 15px; padding: 0 3px; background: rgba(250,250,250,.8); font: 12px/15px Roboto, sans-serif; color: #555; letter-spacing: -.18px; }
.legends { width: 162px; display: flex; flex-direction: column; gap: 6px; font: 11px/14px "Noto Sans", sans-serif; color: #00a000; }
.lg { border: 1px solid #d4d4d4; background: #fff; overflow: hidden; }
.lg p { margin: 0; }
.flt { height: 53px; padding: 5px 6px; } .cty { height: 44px; padding: 4px 3px; } .cit { height: 288px; padding: 4px 3px; }
.flt p { margin-bottom: 3px; }
.dd { border: 1px solid #94da94; height: 20px; line-height: 18px; padding: 0 6px 0 3px; display: flex; align-items: center; justify-content: space-between; }
.lg .h { font-weight: 500; margin-bottom: 1px; }
.li { height: 20px; display: flex; align-items: center; gap: 5px; padding-left: 3px; line-height: 20px; letter-spacing: -.05px; }
.li i { width: 14px; height: 14px; border: 1px solid #666; } .bel { background: #f0e2dd; }
.cl { height: 264px; overflow: hidden; }
.sheets { height: 31px; flex: none; background: #e6e6e6; border: solid #cfcfcf; border-width: 1px 0; display: flex; align-items: center; color: #777; padding-bottom: 2px; font-size: 12.500px; letter-spacing: .1px; }
.sheets > div { height: 29px; display: flex; align-items: center; border-right: 1px solid #cfcfcf; margin-bottom: -2px; padding-bottom: 3px; overflow: hidden; }
.src { width: 126px; padding-left: 11px; gap: 6px; }
.s1 { width: 92px; padding-left: 2px; } .s2 { width: 200px; padding-left: 7px; letter-spacing: .15px; } .s3 { width: 150px; padding-left: 8px; }
.s4 { width: 184px; padding-left: 7px; } .s5 { width: 104px; padding-left: 9px; gap: 6px; } .s6 { width: 105px; padding-left: 10px; gap: 6px; }
.s7 { width: 200px; padding-left: 8px; } .sh.on { background: #fafafa; color: #333; }
.book { width: 33px; padding-left: 9px; gap: 6px; } .book span { width: 4px; overflow: hidden; }
.nw { width: 32px; padding-left: 7px; }
.sheets > .nw { padding-bottom: 0; }
.status { height: 17px; flex: none; background: #ebebeb; display: flex; padding-left: 10px; font-size: 11px; line-height: 18px; color: #333; letter-spacing: -.4px; }
.n1 { width: 55px; } .n2 { width: 95px; }
.task { height: 40px; flex: none; background: linear-gradient(90deg, #0e4560, #0b4663 60%, #09335d); display: flex; color: #fff; font: 12px/16px "Open Sans", sans-serif; }
.start { width: 48px; display: flex; align-items: center; justify-content: center; }
.ts { width: 344px; background: #f3f4f6; border: solid #bcc0c2; border-width: 1px 1px 1px 1px; display: flex; align-items: center; padding-left: 11px; gap: 11px; font-size: 15px; color: #222; letter-spacing: -.5px; }
.app { display: flex; align-items: center; justify-content: center; width: 48px; }
.edge { margin-left: 3px; } .pc { margin-left: 1px; } .chr { margin-left: 1px; background: #1b6c98; border-bottom: 2px solid #9adcf8; }
.tray { margin-left: auto; display: flex; align-items: center; }
.wx { margin-right: 7px; }
.deg { width: 85px; font-size: 13.500px; letter-spacing: -.2px; }
.eng { width: 24px; margin-left: 9px; letter-spacing: -.4px; }
.clock { width: 78px; margin: -1px 8px 0 2px; display: flex; flex-direction: column; align-items: center; line-height: 18px; letter-spacing: -.45px; }
.peek { width: 1px; height: 40px; background: #557a96; margin: 0 4px 0 20px; }
</style>
